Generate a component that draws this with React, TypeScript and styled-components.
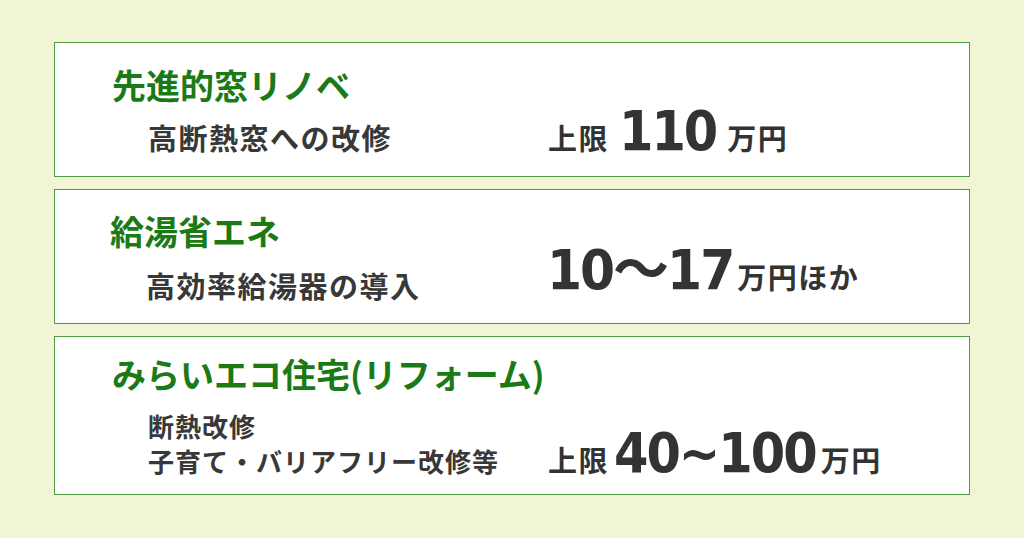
import React from "react";
import styled, { createGlobalStyle } from "styled-components";

const GlobalStyle = createGlobalStyle`
  html, body {
    margin: 0;
    padding: 0;
    background: #f1f5d6;
  }
  body {
    font-family: "Noto Sans CJK JP", "Noto Sans", sans-serif;
  }
`;

const Page = styled.div`
  width: 1024px;
  height: 538px;
  box-sizing: border-box;
  padding: 42px 54px 0 54px;
  display: flex;
  flex-direction: column;
  gap: 12px;
`;

const Card = styled.div<{ $height: number }>`
  box-sizing: border-box;
  height: ${(p) => p.$height}px;
  background: #ffffff;
  border: 1px solid #4f9a45;
  display: grid;
  grid-template-columns: 493px 1fr;
  align-content: center;
`;

const Left = styled.div<{ $indent: number }>`
  display: flex;
  flex-direction: column;
  padding-left: ${(p) => p.$indent}px;
`;

const Title = styled.div`
  color: #1b7a15;
  font-weight: 700;
  font-size: 34px;
  line-height: 40px;
  white-space: nowrap;
`;

const Sub = styled.div<{ $gap: number }>`
  color: #383838;
  font-weight: 700;
  font-size: 29px;
  line-height: 36px;
  letter-spacing: 1.5px;
  padding-left: 36px;
  margin-top: ${(p) => p.$gap}px;
  white-space: nowrap;
`;

const SmallSub = styled(Sub)`
  font-size: 26px;
  line-height: 35px;
  letter-spacing: 1px;
`;

const Amount = styled.div<{ $shift: number }>`
  align-self: end;
  color: #333333;
  font-weight: 700;
  line-height: 1;
  margin-bottom: ${(p) => p.$shift}px;
  white-space: nowrap;
`;

const Unit = styled.span`
  font-size: 29px;
  letter-spacing: 1.5px;
`;

const Big = styled.span<{ $size: number; $left: number; $right: number }>`
  font-family: "DejaVu Sans Condensed", "DejaVu Sans", "Noto Sans CJK JP", sans-serif;
  font-size: ${(p) => p.$size}px;
  line-height: 40px;
  letter-spacing: -2px;
  margin: 0 ${(p) => p.$right}px 0 ${(p) => p.$left}px;
`;

export default function App() {
  return (
    <>
      <GlobalStyle />
      <Page>
        <Card $height={135}>
          <Left $indent={57}>
            <Title>先進的窓リノベ</Title>
            <Sub $gap={14}>高断熱窓への改修</Sub>
          </Left>
          <Amount $shift={3}>
            <Unit>上限</Unit>
            <Big $size={55} $left={10} $right={11}>110</Big>
            <Unit>万円</Unit>
          </Amount>
        </Card>
        <Card $height={135}>
          <Left $indent={55}>
            <Title>給湯省エネ</Title>
            <Sub $gap={16}>高効率給湯器の導入</Sub>
          </Left>
          <Amount $shift={12}>
            <Big $size={56} $left={-1} $right={4}>10〜17</Big>
            <Unit>万円ほか</Unit>
          </Amount>
        </Card>
        <Card $height={159}>
          <Left $indent={57}>
            <Title>みらいエコ住宅(リフォーム)</Title>
            <SmallSub $gap={14}>断熱改修</SmallSub>
            <SmallSub $gap={0}>子育て・バリアフリー改修等</SmallSub>
          </Left>
          <Amount $shift={4}>
            <Unit>上限</Unit>
            <Big $size={55} $left={5} $right={5}>40~100</Big>
            <Unit>万円</Unit>
          </Amount>
        </Card>
      </Page>
    </>
  );
}
